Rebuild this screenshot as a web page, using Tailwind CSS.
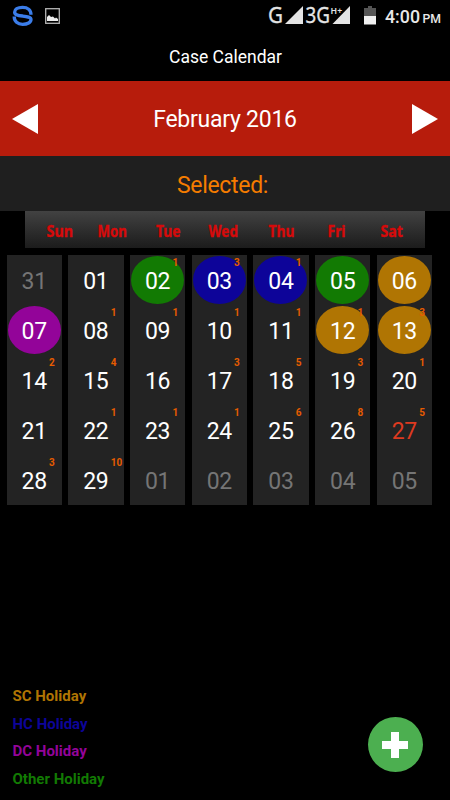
<!DOCTYPE html>
<html lang="en">
<head>
<meta charset="utf-8">
<title>Case Calendar</title>
<script src="https://cdn.jsdelivr.net/npm/@tailwindcss/browser@4"></script>
</head>
<body class="bg-black font-['Roboto',sans-serif] text-white">
<main class="relative flex h-[800px] w-[450px] flex-col overflow-hidden bg-black">
  <header class="h-8 shrink-0">
    <svg class="block" width="450" height="32" viewBox="0 0 450 32">
      <g fill="none" stroke="#3b7de9" stroke-width="3.3" stroke-linejoin="round">
        <path d="M31 14.8C31 10 27.500 7.300 22.600 7.300C17.500 7.300 14.600 9.500 14.600 12.200C14.600 14.800 18 15.400 22.600 16C27.500 16.600 31 17 31 19.500C31 22.300 27.500 24.300 22.600 24.300C17.700 24.300 14.200 21.500 14.200 16.500"/>
      </g>
      <rect x="45.700" y="8.700" width="13.600" height="14.600" fill="none" stroke="#b5b5b5" stroke-width="1.300"/>
      <path d="M47 21V17L49 15L51 17L53 16.500L55 18.500L56 17.500L58 19V21Z" fill="#eee"/>
      <g fill="#e4e4e4" font-family="Noto Sans, sans-serif">
        <text x="268" y="23" font-size="21.500" stroke="#e4e4e4" stroke-width="0.300" textLength="15" lengthAdjust="spacingAndGlyphs">G</text>
        <path d="M285 24L303 6V24Z"/>
        <text x="305.500" y="23" font-size="21.500" stroke="#e4e4e4" stroke-width="0.300" textLength="24.500" lengthAdjust="spacingAndGlyphs">3G</text>
        <path d="M332.500 24L350 6V24Z"/>
        <text x="330.600" y="13.500" font-size="9.500" font-weight="600" stroke="#000" stroke-width="2" paint-order="stroke" textLength="11.500" lengthAdjust="spacingAndGlyphs">H+</text>
      </g>
      <path d="M364 8H368V6H372V8H376V16H364Z" fill="#555"/>
      <path d="M364 16H376V24.500H364Z" fill="#efefef"/>
      <g fill="#e8e8e8" font-family="Roboto, sans-serif" font-weight="500">
        <text x="385" y="23" font-size="18.500" textLength="35" lengthAdjust="spacingAndGlyphs">4:00</text>
        <text x="422.500" y="23" font-size="13.500" textLength="18.500" lengthAdjust="spacingAndGlyphs">PM</text>
      </g>
    </svg>
  </header>
  <h1 class="flex h-[49px] shrink-0 items-center justify-center pl-px pt-0.5 text-[17.500px] font-normal leading-none"><span>Case Calendar</span></h1>
  <nav class="flex h-[75px] shrink-0 items-center justify-between bg-[#b71c0c] px-3">
    <svg width="26" height="30" viewBox="0 0 26 30"><path d="M0 15L26 0V30Z" fill="#fff"/></svg>
    <span class="pt-0.5 text-[23px] leading-none tracking-[-0.250px]">February 2016</span>
    <svg width="26" height="30" viewBox="0 0 26 30"><path d="M26 15L0 0V30Z" fill="#fff"/></svg>
  </nav>
  <div class="flex h-[55px] shrink-0 items-center justify-center bg-[#1f1f1f] pr-[5px] pt-1 text-[23px] leading-none tracking-[-0.300px] text-[#f57c00]"><span>Selected:</span></div>
  <div class="ml-[25px] h-[37px] w-[400px] shrink-0 bg-linear-to-b from-[#424242] to-[#1c1c1c]">
    <svg class="block" width="400" height="37" viewBox="25 211 400 37">
      <g fill="#d60a0a" stroke="#d60a0a" stroke-width="0.400" font-family="Noto Sans, sans-serif" font-weight="700" font-size="16.500">
        <text x="46.500" y="236.700" textLength="26.500" lengthAdjust="spacingAndGlyphs">Sun</text>
        <text x="97.500" y="236.700" textLength="29.500" lengthAdjust="spacingAndGlyphs">Mon</text>
        <text x="156" y="236.700" textLength="24.500" lengthAdjust="spacingAndGlyphs">Tue</text>
        <text x="208.500" y="236.700" textLength="29.500" lengthAdjust="spacingAndGlyphs">Wed</text>
        <text x="268.500" y="236.700" textLength="26" lengthAdjust="spacingAndGlyphs">Thu</text>
        <text x="327.500" y="236.700" textLength="18" lengthAdjust="spacingAndGlyphs">Fri</text>
        <text x="380.500" y="236.700" textLength="22.500" lengthAdjust="spacingAndGlyphs">Sat</text>
      </g>
    </svg>
  </div>
  <section id="calendar" class="mt-[7px] ml-[6.500px] flex h-[250px] w-[425.500px] shrink-0 gap-[6.400px]"></section>
  <footer class="mt-auto flex items-end justify-between pb-[7px] pl-[12.500px] pr-[27.500px]">
    <ul class="text-[15px] font-bold leading-[27.500px]">
      <li class="text-[#b07503]">SC Holiday</li>
      <li class="text-[#0d0499]">HC Holiday</li>
      <li class="text-[#930499]">DC Holiday</li>
      <li class="text-[#127a03]">Other Holiday</li>
    </ul>
    <button aria-label="Add case" class="mb-[21px] flex size-[55px] items-center justify-center rounded-full bg-[#4caf50]">
      <svg width="26" height="26" viewBox="0 0 26 26"><path d="M9 0H17V9H26V17H17V26H9V17H0V9H9Z" fill="#fff"/></svg>
    </button>
  </footer>
</main>
<script>
  // Each column is one weekday; a day is [number, case count, kind].
  const columns = [
    [['31', '', 'dim'], ['07', '', 'dc'], ['14', '2'], ['21'], ['28', '3']],
    [['01'], ['08', '1'], ['15', '4'], ['22', '1'], ['29', '10']],
    [['02', '1', 'other'], ['09', '1'], ['16'], ['23', '1'], ['01', '', 'dim']],
    [['03', '3', 'hc'], ['10', '1'], ['17', '3'], ['24', '1'], ['02', '', 'dim']],
    [['04', '1', 'hc'], ['11', '1'], ['18', '5'], ['25', '6'], ['03', '', 'dim']],
    [['05', '', 'other'], ['12', '1', 'sc'], ['19', '3'], ['26', '8'], ['04', '', 'dim']],
    [['06', '', 'sc'], ['13', '3', 'sc'], ['20', '1'], ['27', '5', 'today'], ['05', '', 'dim']]
  ];
  const kinds = {
    dim: 'text-[#757575]', today: 'text-[#dd3a20]',
    sc: 'bg-[#b07503]', hc: 'bg-[#0d0499]', dc: 'bg-[#930499]', other: 'bg-[#127a03]'
  };
  document.getElementById('calendar').innerHTML = columns.map(days =>
    `<div class="flex flex-1 flex-col bg-[#232323]">${days.map(([day, count = '', kind = '']) =>
      `<div class="relative flex h-[50px] items-center justify-center">
        <span class="flex h-12 w-[53px] items-center justify-center rounded-[50%] pt-0.5 text-[23px] leading-none tracking-[-0.300px] ${kinds[kind] || ''}">${day}</span>
        <span class="absolute left-[42.500px] top-[2px] text-[10px] font-bold leading-[12px] text-[#e65c00]">${count}</span>
      </div>`).join('')}</div>`).join('');
</script>
</body>
</html>
